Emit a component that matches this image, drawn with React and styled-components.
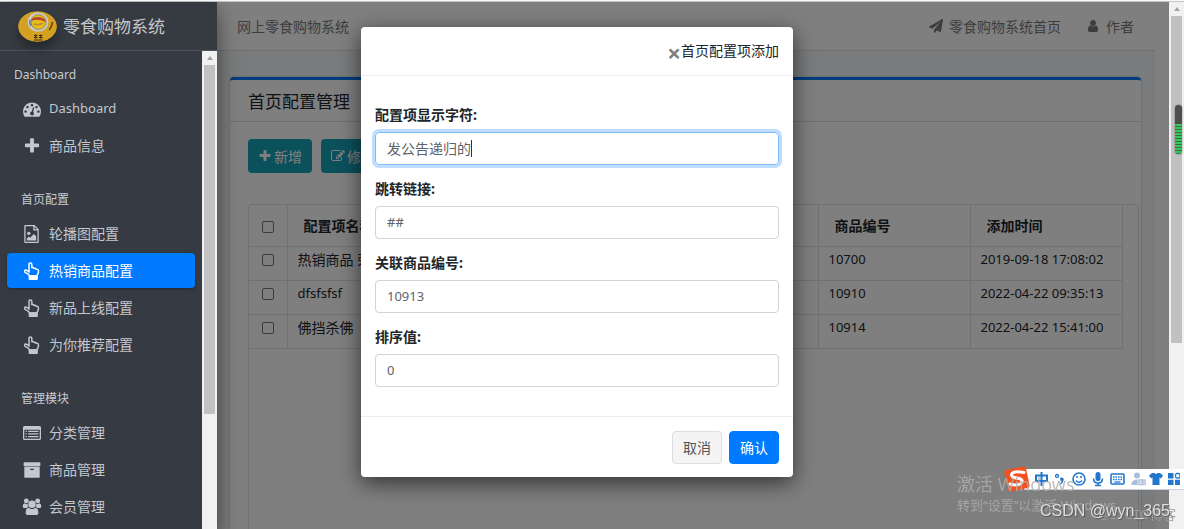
import { useState } from 'react';
import styled, { createGlobalStyle, css } from 'styled-components';

const menu = [
  {
    title: 'Dashboard',
    items: [
      { icon: 'gauge', label: 'Dashboard', latin: true },
      { icon: 'plus', label: '商品信息' },
    ],
  },
  {
    title: '首页配置',
    items: [
      { icon: 'image', label: '轮播图配置' },
      { icon: 'hand', label: '热销商品配置', active: true },
      { icon: 'hand', label: '新品上线配置' },
      { icon: 'hand', label: '为你推荐配置' },
    ],
  },
  {
    title: '管理模块',
    items: [
      { icon: 'list', label: '分类管理' },
      { icon: 'archive', label: '商品管理' },
      { icon: 'users', label: '会员管理' },
    ],
  },
];

const rows = [
  { name: '热销商品 荣耀8X', link: '##', rank: 0, goods: '10700', time: '2019-09-18 17:08:02' },
  { name: 'dfsfsfsf', latin: true, link: '##', rank: 0, goods: '10910', time: '2022-04-22 09:35:13' },
  { name: '佛挡杀佛', link: '##', rank: 0, goods: '10914', time: '2022-04-22 15:41:00' },
];

const fields = [
  { id: 'configName', label: '配置项显示字符:', focused: true },
  { id: 'redirectUrl', label: '跳转链接:', latin: true },
  { id: 'goodsId', label: '关联商品编号:', latin: true },
  { id: 'configRank', label: '排序值:', latin: true },
];

const shapes = {
  gauge: (
    <path d="M384 1152q0-53-37.500-90.500t-90.500-37.500-90.500 37.500-37.500 90.500 37.500 90.500 90.500 37.500 90.500-37.500 37.500-90.500zm192-448q0-53-37.500-90.500t-90.500-37.500-90.500 37.500-37.500 90.500 37.500 90.500 90.500 37.500 90.500-37.500 37.500-90.500zm428 481l101-382q6-26-7.500-48.500t-38.500-29.500-48 6.500-30 39.500l-101 382q-60 5-107 43.500t-63 98.500q-20 77 20 146t117 89 146-20 89-117q16-60-6-117t-72-91zm660-33q0-53-37.500-90.500t-90.500-37.500-90.500 37.500-37.500 90.500 37.500 90.500 90.500 37.500 90.500-37.500 37.500-90.500zm-640-640q0-53-37.500-90.500t-90.500-37.500-90.500 37.500-37.500 90.500 37.500 90.500 90.500 37.500 90.500-37.500 37.500-90.500zm448 192q0-53-37.500-90.500t-90.500-37.500-90.500 37.500-37.500 90.500 37.500 90.500 90.500 37.500 90.500-37.500 37.500-90.500zm320 448q0 261-141 483-19 29-54 29h-1402q-35 0-54-29-141-221-141-483 0-182 71-348t191-286 286-191 348-71 348 71 286 191 191 286 71 348z" />
  ),
  plus: (
    <path d="M1600 736v192q0 40-28 68t-68 28h-416v416q0 40-28 68t-68 28h-192q-40 0-68-28t-28-68v-416h-416q-40 0-68-28t-28-68v-192q0-40 28-68t68-28h416v-416q0-40 28-68t68-28h192q40 0 68 28t28 68v416h416q40 0 68 28t28 68z" />
  ),
  image: (
    <g fillRule="evenodd">
      <path d="M224 0H1150L1568 418V1696q0 96-96 96H224q-96 0-96-96V96q0-96 96-96zM256 128V1664H1440V544H1024V128zM1152 170V416H1398z" />
      <path d="M384 1536V1344L576 1152L704 1280L1088 896L1312 1120V1536z" />
      <circle cx="576" cy="832" r="170" />
    </g>
  ),
  hand: (
    <g fill="none" stroke="currentColor" strokeWidth="150" strokeLinejoin="round">
      <path d="M600 1010V250Q600 90 740 90T880 250V580Q1010 510 1100 640Q1230 590 1310 720Q1530 680 1540 900Q1550 1100 1450 1240Q1400 1320 1400 1400H640Q610 1290 480 1190Q370 1080 230 1060Q130 1030 160 900Q200 780 340 820Q480 860 600 1010z" />
      <path d="M640 1400H1400V1720H640z" fill="currentColor" />
    </g>
  ),
  list: (
    <g>
      <path
        fillRule="evenodd"
        d="M160 192H1632q160 0 160 160V1440q0 160-160 160H160Q0 1600 0 1440V352q0-160 160-160zM128 576V1408q0 64 64 64H1600q64 0 64-64V576z"
      />
      <path d="M256 672h128v128H256zM512 672h1024v128H512zM256 928h128v128H256zM512 928h1024v128H512zM256 1184h128v128H256zM512 1184h1024v128H512z" />
    </g>
  ),
  archive: (
    <path d="M1088 832q0-26-19-45t-45-19h-256q-26 0-45 19t-19 45 19 45 45 19h256q26 0 45-19t19-45zm576-192v960q0 26-19 45t-45 19h-1408q-26 0-45-19t-19-45v-960q0-26 19-45t45-19h1408q26 0 45 19t19 45zm64-448v256q0 26-19 45t-45 19h-1536q-26 0-45-19t-19-45v-256q0-26 19-45t45-19h1536q26 0 45 19t19 45z" />
  ),
  users: (
    <g>
      <circle cx="330" cy="290" r="240" />
      <circle cx="1462" cy="290" r="240" />
      <circle cx="896" cy="620" r="370" />
      <path d="M130 520Q330 660 450 560Q440 780 560 900Q430 900 360 1000H150Q-30 1000-30 850Q-20 560 130 520z" />
      <path d="M1662 520Q1462 660 1342 560Q1352 780 1232 900Q1362 900 1432 1000H1642Q1822 1000 1822 850Q1812 560 1662 520z" />
      <path d="M560 960Q896 1240 1232 960Q1530 980 1530 1440Q1530 1700 1290 1700H502Q262 1700 262 1440Q262 980 560 960z" />
    </g>
  ),
  edit: (
    <path d="M888 1184l116-116-152-152-116 116v56h96v96h56zm440-720q-16-16-33 1l-350 350q-17 17-1 33t33-1l350-350q17-17 1-33zm80 594v190q0 119-84.500 203.500t-203.500 84.500h-832q-119 0-203.500-84.500t-84.500-203.500v-832q0-119 84.500-203.500t203.500-84.500h832q63 0 117 25 15 7 18 23 3 17-9 29l-49 49q-14 14-32 8-23-6-45-6h-832q-66 0-113 47t-47 113v832q0 66 47 113t113 47h832q66 0 113-47t47-113v-126q0-13 9-22l64-64q15-15 35-7t20 29zm-96-738l288 288-672 672h-288v-288zm444 132l-92 92-288-288 92-92q28-28 68-28t68 28l152 152q28 28 28 68t-28 68z" />
  ),
  plane: (
    <path d="M1764 11q33 24 27 64l-256 1536q-5 29-32 45-14 8-31 8-11 0-24-5l-453-185-242 295q-18 23-49 23-13 0-22-4-19-7-30.500-23.500t-11.500-36.500v-349l864-1059-1069 925-395-162q-37-14-40-55-2-40 32-59l1664-960q15-9 32-9 20 0 36 11z" />
  ),
  user: (
    <path d="M1536 1399q0 109-62.500 187t-150.500 78h-854q-88 0-150.500-78t-62.500-187q0-85 8.500-160.500t31.500-152 58.500-131 94-89 134.500-34.500q131 128 313 128t313-128q76 0 134.500 34.500t94 89 58.500 131 31.500 152 8.500 160.500zm-256-887q0 159-112.500 271.500t-271.500 112.500-271.500-112.500-112.500-271.500 112.500-271.500 271.500-112.500 271.500 112.500 112.500 271.500z" />
  ),
};

const Icon = ({ name, size = 14 }) => (
  <IconSvg viewBox="0 0 1792 1792" width={size} height={size} aria-hidden="true">
    {shapes[name]}
  </IconSvg>
);

const BrandLogo = () => (
  <LogoSvg viewBox="0 0 39 31" width="39" height="31" aria-hidden="true">
    <ellipse cx="19.500" cy="15.500" rx="19.500" ry="15.300" fill="#d5a021" />
    <ellipse cx="20" cy="11" rx="10.500" ry="9.800" fill="#c9c9c6" />
    <ellipse cx="20.500" cy="11" rx="7.500" ry="7.300" fill="#e3bd22" stroke="#8d7b3a" strokeWidth="0.800" />
    <path d="M13.500 8Q20 4 27 8.500L27.500 11Q20 7 13.500 10z" fill="#b8412c" />
    <path d="M16 13Q20 15 25 12" stroke="#c58a1c" strokeWidth="1.500" fill="none" />
    <path d="M12 9Q11 12 13 15" stroke="#6c7890" strokeWidth="1.500" fill="none" />
    <path d="M34.500 11Q34 16 31 19" stroke="#5b4513" strokeWidth="1.500" fill="none" />
    <path d="M16 24.500h3.500M16 26.500h3.500M17.700 23.500v4M21 24.500h3.500M21 26.500h3.500M22.700 23.500v4M16 29h8.500" stroke="#3d2f12" strokeWidth="1.200" />
  </LogoSvg>
);

const ImeIcons = () => (
  <svg viewBox="0 0 150 20" width="150" height="20" aria-hidden="true">
    <g fill="none" stroke="#2277cc" strokeWidth="2">
      <path d="M6 6.500h11v5.500H6zM11.500 3v14" />
      <circle cx="27" cy="7" r="1.500" strokeWidth="1.300" />
      <circle cx="49" cy="10" r="6" strokeWidth="1.600" />
      <path d="M46 11.500Q49 15 52 11.500M47 7v2M51 7v2" strokeWidth="1.400" />
      <path d="M63.500 9.500Q63.500 14 68 14T72.500 9.500M68 14v3M65 16.500h6" strokeWidth="1.600" />
      <rect x="81" y="5" width="13" height="10" rx="1" strokeWidth="1.600" />
      <path d="M83 8h9M83 10.500h9" strokeWidth="1.400" strokeDasharray="1.500 1" />
      <path d="M84.500 13h6" strokeWidth="1.300" />
    </g>
    <g fill="#2277cc">
      <path d="M30 9.500a2 2 0 1 1 3.500 2q-.5 3-3 4l-.5-1q1.500-1 1.500-2.500-1.500-.5-1.500-2.500z" />
      <rect x="65.500" y="3" width="5" height="9" rx="2.500" />
      <path d="M122 4h2.500q1.500 2 3 0h2.500l3 2.500-2 3-1.500-1V16h-7V8.500l-1.500 1-2-3z" />
      <path d="M138 4h5.500v5.500H138zM138 10.700h5.500v5.300H138zM145 10.700h5v5.300h-5z" />
    </g>
    <rect x="145.500" y="4.500" width="4.500" height="4.500" rx="1.500" fill="none" stroke="#2277cc" strokeWidth="1.300" />
    <g fill="#a9bddb">
      <circle cx="107" cy="6.500" r="3" />
      <path d="M101.500 16q0-5.500 5.500-5.500h2v5.500z" />
      <path d="M108 10h8v6.500h-8z" stroke="#fff" strokeWidth="0.600" />
    </g>
    <path d="M110 12h2M110 14.500h2M110 12v3M114 11.500v4" stroke="#fff" strokeWidth="0.800" />
  </svg>
);

const SogouLogo = () => (
  <LogoTile viewBox="0 0 26 26" width="26" height="26" aria-hidden="true">
    <rect x="2" y="2" width="22" height="22" rx="2.500" fill="#f4511e" transform="rotate(-12 13 13)" />
    <path d="M20 6.500Q9 4.500 7.500 8.500Q7 11.500 13 12Q19 13 18 16Q16 20.500 6 18" fill="none" stroke="#fff" strokeWidth="3" strokeLinecap="round" />
  </LogoTile>
);

const App = () => {
  const [open, setOpen] = useState(true);
  const [values, setValues] = useState({
    configName: '发公告递归的',
    redirectUrl: '##',
    goodsId: '10913',
    configRank: '0',
  });

  const handleChange = (event) => {
    setValues({ ...values, [event.target.id]: event.target.value });
  };

  return (
    <Page>
      <GlobalStyle />
      <Shell>
        <Sidebar>
          <Brand href="#home">
            <BrandLogo />
            零食购物系统
          </Brand>
          <SidebarBody>
            <Nav>
              {menu.map((group, index) => (
                <NavGroup key={group.title}>
                  <NavTitle $nested={index > 0}>{group.title}</NavTitle>
                  {group.items.map((item) => (
                    <NavLink key={item.label} href="#menu" $active={item.active} $latin={item.latin}>
                      <Icon name={item.icon} size={18} />
                      {item.label}
                    </NavLink>
                  ))}
                </NavGroup>
              ))}
            </Nav>
            <Scrollbar>
              <ScrollArrow />
              <ScrollThumb $share="73%" />
            </Scrollbar>
          </SidebarBody>
        </Sidebar>

        <Workspace>
          <Navbar>
            <TopLink href="#home">网上零食购物系统</TopLink>
            <TopActions>
              <TopLink href="#index">
                <Icon name="plane" />
                零食购物系统首页
              </TopLink>
              <TopLink href="#author">
                <Icon name="user" />
                作者
              </TopLink>
            </TopActions>
          </Navbar>
          <Content>
            <Card>
              <CardTitle>首页配置管理</CardTitle>
              <CardBody>
                <Toolbar>
                  <ToolButton type="button" onClick={() => setOpen(true)}>
                    <Icon name="plus" />
                    新增
                  </ToolButton>
                  <ToolButton type="button">
                    <Icon name="edit" />
                    修改
                  </ToolButton>
                </Toolbar>
                <GridFrame>
                  <Table>
                    <colgroup>
                      <CheckCol />
                      <WideCol />
                      <WideCol />
                      <WideCol />
                      <DataCol />
                      <DataCol />
                    </colgroup>
                    <thead>
                      <tr>
                        <Th>
                          <Checkbox type="checkbox" aria-label="全选" />
                        </Th>
                        <Th>配置项名称</Th>
                        <Th>跳转链接</Th>
                        <Th>排序值</Th>
                        <Th>商品编号</Th>
                        <Th>添加时间</Th>
                      </tr>
                    </thead>
                    <tbody>
                      {rows.map((row) => (
                        <tr key={row.goods}>
                          <Td>
                            <Checkbox type="checkbox" aria-label={row.name} />
                          </Td>
                          <Td $latin={row.latin}>{row.name}</Td>
                          <Td $latin>{row.link}</Td>
                          <Td $latin>{row.rank}</Td>
                          <Td $latin>{row.goods}</Td>
                          <Td $latin>{row.time}</Td>
                        </tr>
                      ))}
                    </tbody>
                  </Table>
                </GridFrame>
              </CardBody>
            </Card>
          </Content>
          {open && <Backdrop />}
        </Workspace>

        <Scrollbar>
          <ScrollArrow />
          <ScrollThumb $share="62%" />
        </Scrollbar>

        {open && (
          <ModalLayer>
            <Modal role="dialog" aria-labelledby="modalTitle">
              <ModalHeader>
                <CloseButton type="button" aria-label="关闭" onClick={() => setOpen(false)}>
                  ×
                </CloseButton>
                <ModalTitle id="modalTitle">首页配置项添加</ModalTitle>
              </ModalHeader>
              <ModalBody>
                {fields.map((field) => (
                  <Field key={field.id}>
                    <Label htmlFor={field.id}>{field.label}</Label>
                    <InputShell $focused={field.focused}>
                      <Input
                        id={field.id}
                        type="text"
                        value={values[field.id]}
                        onChange={handleChange}
                        $latin={field.latin}
                      />
                      {field.focused && <Caret />}
                    </InputShell>
                  </Field>
                ))}
              </ModalBody>
              <ModalFooter>
                <DialogButton type="button" onClick={() => setOpen(false)}>
                  取消
                </DialogButton>
                <DialogButton type="button" $primary>
                  确认
                </DialogButton>
              </ModalFooter>
            </Modal>
          </ModalLayer>
        )}
      </Shell>

      <ImeBar>
        <SogouLogo />
        <ImeStrip>
          <ImeIcons />
        </ImeStrip>
      </ImeBar>
      <ActivationNote>
        <NoteTitle>激活 Windows</NoteTitle>
        <NoteText>转到“设置”以激活 Windows。</NoteText>
      </ActivationNote>
      <BlogMark>@51CTO博客</BlogMark>
      <AuthorMark>CSDN @wyn_365</AuthorMark>
      <LevelMeter />
    </Page>
  );
};

// STYLED COMPONENTS

const GlobalStyle = createGlobalStyle`
  * {
    box-sizing: border-box;
  }

  body {
    margin: 0;
    overflow: hidden;
    font-family: "Noto Sans", "Noto Sans CJK SC", sans-serif;
    font-size: 14px;
    line-height: 21px;
    color: #212529;
  }

  a {
    text-decoration: none;
  }
`;

const Page = styled.div`
  height: 100vh;
  display: flex;
  flex-direction: column;
  border-top: 1px solid #f8f8f8;
  overflow: hidden;
`;

const Shell = styled.div`
  position: relative;
  flex: 1;
  min-height: 0;
  display: flex;
  border-top: 1px solid #c4c7c9;
`;

const IconSvg = styled.svg`
  flex: none;
  fill: currentColor;
  overflow: visible;
`;

const LogoSvg = styled.svg`
  flex: none;
  border-radius: 50%;
  box-shadow: 0 7px 10px rgba(0, 0, 0, 0.3);
`;

const Sidebar = styled.aside`
  flex: none;
  width: 217px;
  display: flex;
  flex-direction: column;
  background: #363a42;
  box-shadow: 0 10px 20px rgba(0, 0, 0, 0.5);
  z-index: 1;
`;

const Brand = styled.a`
  flex: none;
  height: 49px;
  padding-left: 18px;
  display: flex;
  align-items: center;
  gap: 6px;
  border-bottom: 1px solid #4b545c;
  background: #353b41;
  color: #c6c8ca;
  font-size: 17px;
`;

const SidebarBody = styled.div`
  flex: 1;
  min-height: 0;
  display: flex;
`;

const Nav = styled.nav`
  flex: 1;
  padding: 13px 7px 0;
  overflow: hidden;
`;

const NavGroup = styled.div`
  margin-bottom: 26px;
`;

const NavTitle = styled.div`
  margin-bottom: 6px;
  padding-left: ${(props) => (props.$nested ? 14 : 7)}px;
  color: #c6cad2;
  font-size: 12px;
`;

const NavLink = styled.a`
  height: 35px;
  margin-bottom: 2px;
  padding-left: 16px;
  display: flex;
  align-items: center;
  gap: 8px;
  border-radius: 4px;
  color: #c2c7d0;
  font-size: ${(props) => (props.$latin ? 13 : 14)}px;

  ${(props) =>
    props.$active &&
    css`
      background: #007bff;
      box-shadow: 0 1px 3px rgba(0, 0, 0, 0.3);
      color: #fff;
    `}
`;

const Scrollbar = styled.div`
  flex: none;
  width: 15px;
  padding: 0 2px;
  background: #f1f1f1;
`;

const ScrollArrow = styled.div`
  height: 14px;
  display: flex;
  align-items: center;
  justify-content: center;

  &::before {
    content: '';
    border: 3px solid transparent;
    border-top: 0;
    border-bottom: 4px solid #a3a3a3;
  }
`;

const ScrollThumb = styled.div`
  height: ${(props) => props.$share};
  background: #c1c1c1;
`;

const Workspace = styled.div`
  position: relative;
  flex: 1;
  min-width: 0;
  display: flex;
  flex-direction: column;
  padding-right: 14px;
  background: #fff;
`;

const Navbar = styled.header`
  flex: none;
  height: 49px;
  padding: 0 21px 0 20px;
  display: flex;
  align-items: center;
  justify-content: space-between;
  border-bottom: 1px solid #dee2e6;
`;

const TopLink = styled.a`
  display: flex;
  align-items: center;
  gap: 6px;
  color: #7b7b7b;
`;

const TopActions = styled.div`
  display: flex;
  gap: 25px;
`;

const Content = styled.main`
  flex: 1;
  min-height: 0;
  padding: 26px 14px 0 13px;
  display: flex;
  background: #f4f6f9;
`;

const Card = styled.section`
  flex: 1;
  min-width: 0;
  display: flex;
  flex-direction: column;
  border-top: 3px solid #007bff;
  border-radius: 4px 4px 0 0;
  background: #fff;
  box-shadow: 0 0 2px rgba(0, 0, 0, 0.3);
`;

const CardTitle = styled.h1`
  height: 42px;
  margin: 0;
  padding-left: 18px;
  border-bottom: 1px solid #dfdfdf;
  font-size: 17px;
  font-weight: 400;
  line-height: 43px;
`;

const CardBody = styled.div`
  flex: 1;
  min-height: 0;
  padding: 17px 2px 0 18px;
  display: flex;
  flex-direction: column;
`;

const Toolbar = styled.div`
  margin-bottom: 31px;
  display: flex;
  gap: 9px;
`;

const ToolButton = styled.button`
  height: 34px;
  padding: 0 10px;
  display: flex;
  align-items: center;
  gap: 2px;
  border: 0;
  border-radius: 4px;
  background: #17a2b8;
  color: #fff;
  font: inherit;
`;

const GridFrame = styled.div`
  flex: 1;
  min-height: 0;
  padding-right: 17px;
  border: 1px solid #dee2e6;
  border-bottom: 0;
  border-radius: 4px 4px 0 0;
  overflow: hidden;
`;

const Table = styled.table`
  width: 100%;
  table-layout: fixed;
  border-collapse: collapse;
`;

const CheckCol = styled.col`
  width: 38px;
`;

const WideCol = styled.col`
  width: 177px;
`;

const DataCol = styled.col`
  width: 152px;
`;

const cell = css`
  border: 1px solid #dee2e6;
  border-left: 0;
  text-align: left;
  white-space: nowrap;
  overflow: hidden;

  &:first-child {
    padding: 0;
    text-align: center;
  }
`;

const Th = styled.th`
  ${cell}
  height: 41px;
  padding: 0 16px;
  border-top: 0;
  font-weight: 700;
`;

const Td = styled.td`
  ${cell}
  height: 34px;
  padding: 0 10px 8px;
  font-size: ${(props) => (props.$latin ? 13 : 14)}px;

  &:first-child {
    padding-bottom: 10px;
  }
`;

const Checkbox = styled.input`
  width: 12px;
  height: 12px;
  margin: 0;
  appearance: none;
  border: 1px solid #767676;
  border-radius: 2px;
  background: #fff;
  vertical-align: middle;
`;

const Backdrop = styled.div`
  position: absolute;
  inset: 0;
  background: rgba(0, 0, 0, 0.5);
`;

const ModalLayer = styled.div`
  position: absolute;
  inset: 0 30px 0 0;
  padding-top: 25px;
  display: flex;
  justify-content: center;
  align-items: flex-start;
  z-index: 2;
`;

const Modal = styled.div`
  width: 432px;
  border-radius: 4px;
  background: #fff;
  box-shadow: 0 6px 22px rgba(0, 0, 0, 0.6);
`;

const ModalHeader = styled.header`
  height: 49px;
  padding: 0 14px 2px;
  display: flex;
  align-items: center;
  justify-content: flex-end;
  border-bottom: 1px solid #e9ecef;
`;

const CloseButton = styled.button`
  padding: 4px 0 0;
  border: 0;
  background: none;
  color: #7f7f7f;
  font: 700 24px "Noto Sans", sans-serif;
  line-height: 21px;
`;

const ModalTitle = styled.h2`
  margin: 0;
  font-size: 14px;
  font-weight: 400;
`;

const ModalBody = styled.div`
  padding: 28px 14px 16px;
`;

const Field = styled.div`
  margin-bottom: 13px;
`;

const Label = styled.label`
  display: block;
  margin-bottom: 7px;
  font-weight: 700;
`;

const InputShell = styled.div`
  height: 33px;
  padding: 0 11px;
  display: flex;
  align-items: center;
  border: 1px solid #ced4da;
  border-radius: 4px;

  ${(props) =>
    props.$focused &&
    css`
      border-color: #80bdff;
      box-shadow: 0 0 0 3px #bfdeff;
    `}
`;

const Input = styled.input`
  field-sizing: content;
  padding: 0;
  border: 0;
  outline: 0;
  background: none;
  color: #5c636a;
  font: inherit;
  font-size: ${(props) => (props.$latin ? 13 : 14)}px;
`;

const Caret = styled.span`
  width: 1px;
  height: 17px;
  background: #333;
`;

const ModalFooter = styled.footer`
  padding: 14px 14px 13px;
  display: flex;
  justify-content: flex-end;
  gap: 7px;
  border-top: 1px solid #e9ecef;
`;

const DialogButton = styled.button`
  height: 33px;
  padding: 0 10px;
  border: 1px solid ${(props) => (props.$primary ? '#007bff' : '#ddd')};
  border-radius: 4px;
  background: ${(props) => (props.$primary ? '#007bff' : '#f4f4f4')};
  color: ${(props) => (props.$primary ? '#fff' : '#555')};
  font: inherit;
`;

const ActivationNote = styled.div`
  position: fixed;
  right: 58px;
  bottom: 13px;
  width: 169px;
  color: rgba(175, 175, 175, 0.8);
  white-space: nowrap;
  z-index: 3;
`;

const NoteTitle = styled.div`
  font-size: 18px;
`;

const NoteText = styled.div`
  font-size: 13px;
`;

const ImeBar = styled.div`
  position: fixed;
  right: 0;
  bottom: 37px;
  display: flex;
  align-items: center;
  z-index: 3;
`;

const LogoTile = styled.svg`
  position: relative;
`;

const ImeStrip = styled.div`
  height: 21px;
  margin-left: -6px;
  padding: 0 4px 0 6px;
  border-bottom: 1px solid #c8d0dc;
  background: #fff;
  z-index: -1;
`;

const AuthorMark = styled.div`
  position: fixed;
  right: 14px;
  bottom: 6px;
  color: #dedede;
  font-family: "Liberation Sans", sans-serif;
  font-size: 16px;
  line-height: 24px;
  text-shadow: 1px 1px 1px #555;
  z-index: 4;
`;

const BlogMark = styled.div`
  position: fixed;
  right: 8px;
  bottom: 4px;
  color: #9c9c9c;
  font-size: 13px;
  z-index: 3;
`;

const LevelMeter = styled.div`
  position: fixed;
  right: 2px;
  top: 105px;
  width: 7px;
  height: 49px;
  border-radius: 4px;
  background:
    repeating-linear-gradient(#34c759 0 2px, #3c6b47 2px 3px) 0 19px no-repeat,
    #4d4d4d;
  box-shadow: 0 0 2px rgba(0, 0, 0, 0.5);
  z-index: 3;
`;

export default App;
